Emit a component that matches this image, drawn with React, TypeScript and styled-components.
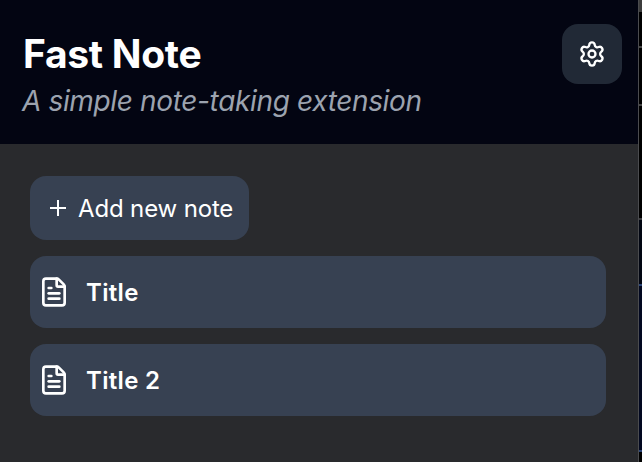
import React from 'react';
import styled, { createGlobalStyle } from 'styled-components';
import { FileText, Settings } from 'lucide-react';

const GlobalStyle = createGlobalStyle`
  * { box-sizing: border-box; }
  body { margin: 0; background: #000; overflow: hidden; font-family: Inter, "Liberation Sans", sans-serif; }
`;

const Window = styled.div`
  display: flex;
  width: 642px;
  height: 462px;
`;

const Popup = styled.div`
  width: 638px;
  background: #292a2d;
`;

const Header = styled.header`
  display: flex;
  justify-content: space-between;
  height: 144px;
  padding: 24px 16px 0 22px;
  background: #030512;
`;

const AppTitle = styled.h1`
  margin: 6px 0 0;
  padding-left: 1px;
  font-size: 39px;
  line-height: 48px;
  font-weight: 700;
  letter-spacing: -0.3px;
  color: #fff;
  white-space: nowrap;
`;

const Tagline = styled.p`
  margin: 5px 0 0;
  font-size: 28px;
  line-height: 36px;
  font-style: italic;
  letter-spacing: -0.35px;
  color: #9ca3af;
  white-space: nowrap;
`;

const SettingsButton = styled.button`
  display: flex;
  align-items: center;
  justify-content: center;
  width: 60px;
  height: 60px;
  padding: 0;
  border: 0;
  border-radius: 16px;
  background: #212936;
  color: #fff;
`;

const Notes = styled.main`
  display: flex;
  flex-direction: column;
  align-items: flex-start;
  gap: 16px;
  padding: 32px 32px 0 30px;
`;

const AddButton = styled.button`
  display: flex;
  align-items: center;
  gap: 12px;
  width: 219px;
  height: 64px;
  padding: 0 0 0 20px;
  border: 0;
  border-radius: 16px;
  background: #374152;
  color: #fff;
  font-family: inherit;
  font-size: 24px;
  line-height: 32px;
  letter-spacing: -0.15px;
  white-space: nowrap;
`;

const AddLabel = styled.span`
  padding-top: 2px;
`;

const NoteRow = styled.div`
  display: flex;
  align-items: center;
  gap: 16px;
  width: 576px;
  height: 72px;
  padding-left: 8px;
  border-radius: 16px;
  background: #374152;
  color: #fff;
`;

const NoteTitle = styled.span`
  padding-top: 2px;
  font-size: 24px;
  line-height: 32px;
  font-weight: 600;
  letter-spacing: 0.3px;
`;

const Page = styled.div`
  display: flex;
  flex-direction: column;
  width: 4px;
  border-left: 1px solid #4b4c4f;
`;

const PageBlock = styled.div<{ $height: number; $color: string }>`
  height: ${(p) => p.$height}px;
  background: ${(p) => p.$color};
`;

const pageBlocks: [number, string][] = [
  [12, '#3c3c3c'], [34, '#000'], [2, '#444'], [56, '#000'], [2, '#444'],
  [112, '#000'], [2, '#3c3c3f'], [64, '#020612'], [2, '#2a4476'],
  [164, '#020820'], [2, '#2a4476'], [10, '#000'],
];

export default function App() {
  return (
    <Window>
      <GlobalStyle />
      <Popup>
        <Header>
          <div>
            <AppTitle>Fast Note</AppTitle>
            <Tagline>A simple note-taking extension</Tagline>
          </div>
          <SettingsButton aria-label="Settings">
            <Settings size={28} />
          </SettingsButton>
        </Header>
        <Notes>
          <AddButton>
            <svg width="16" height="16" viewBox="0 0 16 16" stroke="currentColor" strokeWidth="2">
              <path d="M8 0v16M0 8h16" />
            </svg>
            <AddLabel>Add new note</AddLabel>
          </AddButton>
          {['Title', 'Title 2'].map((title) => (
            <NoteRow key={title}>
              <FileText size={32} />
              <NoteTitle>{title}</NoteTitle>
            </NoteRow>
          ))}
        </Notes>
      </Popup>
      <Page>
        {pageBlocks.map(([height, color], i) => (
          <PageBlock key={i} $height={height} $color={color} />
        ))}
      </Page>
    </Window>
  );
}
